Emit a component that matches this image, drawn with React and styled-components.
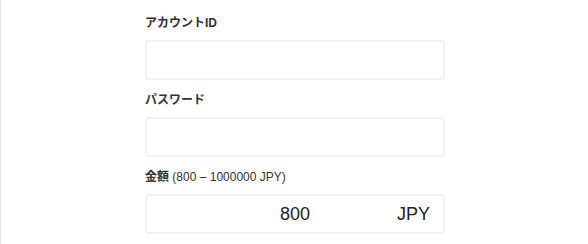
import React from "react";
import styled, { createGlobalStyle } from "styled-components";

const Global = createGlobalStyle`
  html, body { margin: 0; padding: 0; background: #fff; }
  body { font-family: "Liberation Sans", Arial, "Noto Sans CJK JP", sans-serif; color: #333; }
  * { box-sizing: border-box; }
`;

const Page = styled.div`
  min-height: 244px;
  border-left: 1px solid #e6e6e6;
  padding: 14px 0 0 144px;
`;

const Form = styled.form`
  width: 300px;
  display: flex;
  flex-direction: column;
  gap: 11px;
`;

const Field = styled.div`
  display: flex;
  flex-direction: column;
  gap: 8px;
`;

const Label = styled.label`
  font-size: 12px;
  line-height: 18px;
  font-weight: 700;
  color: #333;
  font-family: "Liberation Sans", Arial, "Noto Sans CJK JP", sans-serif;
`;

const Hint = styled.span`
  font-weight: 400;
`;

const InputWrap = styled.div`
  position: relative;
`;

const Input = styled.input`
  display: block;
  width: 100%;
  height: 40px;
  border: 2px solid #f1f1f1;
  border-radius: 4px;
  background: #fff;
  outline: none;
  padding: 0 14px;
  font-family: "Liberation Sans", Arial, sans-serif;
  font-size: 18px;
  color: #222;
  text-align: ${(p) => (p.$center ? "center" : "left")};
`;

const Suffix = styled.span`
  position: absolute;
  right: 15px;
  top: 0;
  height: 40px;
  display: flex;
  align-items: center;
  font-size: 18px;
  color: #222;
  pointer-events: none;
`;

export default function App() {
  return (
    <>
      <Global />
      <Page>
        <Form onSubmit={(e) => e.preventDefault()}>
          <Field>
            <Label>アカウントID</Label>
            <InputWrap>
              <Input type="text" />
            </InputWrap>
          </Field>
          <Field>
            <Label>パスワード</Label>
            <InputWrap>
              <Input type="password" />
            </InputWrap>
          </Field>
          <Field>
            <Label>
              金額 <Hint>(800 – 1000000 JPY)</Hint>
            </Label>
            <InputWrap>
              <Input type="text" defaultValue="800" $center />
              <Suffix>JPY</Suffix>
            </InputWrap>
          </Field>
        </Form>
      </Page>
    </>
  );
}
